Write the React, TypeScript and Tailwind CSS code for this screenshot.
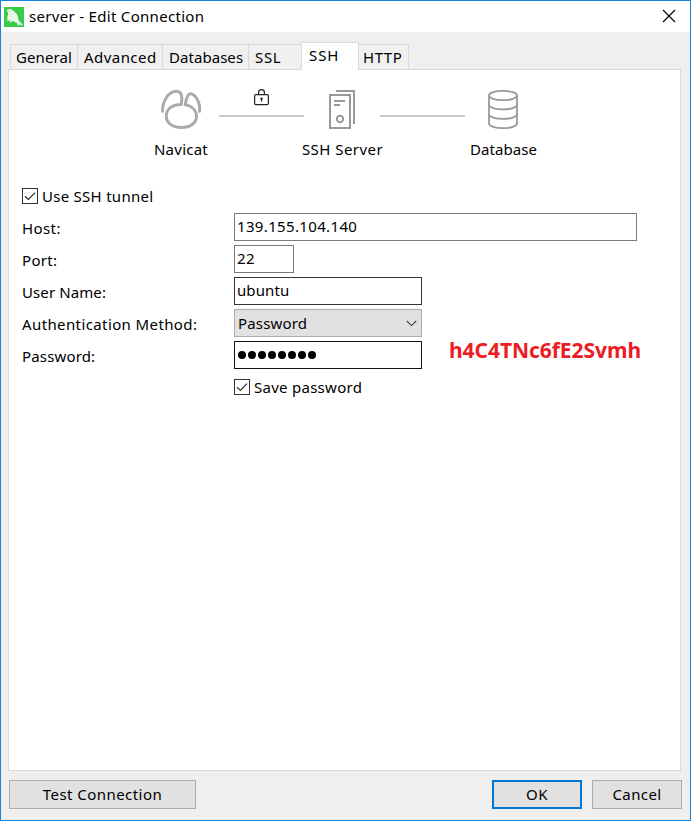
import React from 'react';

function CheckBox({ label, tracking }: { label: string; tracking: string }) {
  return (
    <label className="flex h-4 items-center">
      <span className="flex size-4 shrink-0 items-center justify-center border border-[#333] bg-white">
        <svg width="14" height="14" viewBox="0 0 14 14" fill="none" stroke="#333" strokeWidth="1.3">
          <path d="M2 7.2 5.4 10.4 12 3.6" />
        </svg>
      </span>
      <span className={`ml-1 whitespace-nowrap ${tracking}`}>{label}</span>
    </label>
  );
}

function Row({ label, tracking, children }: { label: string; tracking: string; children: React.ReactNode }) {
  return (
    <div className="flex h-8">
      <div className={`w-[212px] shrink-0 pt-px leading-7 whitespace-nowrap ${tracking}`}>{label}</div>
      {children}
    </div>
  );
}

function Logo() {
  return (
    <svg width="20" height="20" viewBox="0 0 20 20">
      <rect width="20" height="20" fill="#3bcb4b" />
      <path
        d="M2.3 2.8 4 2.8 5.5 2.1 8 2.7 10.8 5 13 7.2 14 10 14.4 13 16 15 18.9 17.6 18.2 18.4 15.7 17.5 14.3 18.9 13.4 16.5 10.8 14.9 8 13.8 7 15.8 5.6 14.6 5.6 12.6 3.6 14.5 3.2 10.5 4.2 7.4 3.7 4.9Z"
        fill="#e9f7e9"
      />
      <circle cx="5.4" cy="4.5" r=".5" fill="#3bcb4b" />
    </svg>
  );
}

const tabs = [
  { name: 'General', cls: 'w-[67px] pl-[5px]', text: 'tracking-[0.1px]' },
  { name: 'Advanced', cls: 'w-[85px] pl-[6px]', text: 'tracking-[0.45px]' },
  { name: 'Databases', cls: 'w-[86px] pl-[6px]', text: 'tracking-[0.05px]' },
  { name: 'SSL', cls: 'w-[53px] pl-[6px]', text: 'tracking-[0.7px]' },
  { name: 'SSH', cls: '', text: 'tracking-[0.9px]' },
  { name: 'HTTP', cls: 'w-[50px] pl-[4px]', text: 'tracking-[0.55px]' },
];

export default function App() {
  return (
    <div className="flex h-[821px] w-[691px] flex-col border border-[#1883d7] bg-[#efefef] font-['Noto_Sans','Noto_Sans_CJK_SC',sans-serif] text-[15px] text-black">
      <header className="flex h-[31px] shrink-0 items-center bg-white pl-[3px]">
        <Logo />
        <h1 className="ml-[5px] grow whitespace-nowrap tracking-[0.31px]">server - Edit Connection</h1>
        <svg className="mr-[14px] mb-px" width="14" height="14" viewBox="0 0 14 14" stroke="#000" strokeWidth="1.15">
          <path d="M1 1 13 13M13 1 1 13" />
        </svg>
      </header>

      <nav className="z-10 flex h-[37px] shrink-0 items-end pl-[9px]">
        {tabs.map((t) =>
          t.name === 'SSH' ? (
            <div key={t.name} className="-mb-px h-[28px] w-[58px] border border-b-0 border-[#d9d9d9] bg-white pl-[7px] leading-[25px]">
              <span className={t.text}>{t.name}</span>
            </div>
          ) : (
            <div
              key={t.name}
              className={`h-[25px] shrink-0 border-t border-[#d9d9d9] bg-[#f0f0f0] leading-[25px] ${t.name === 'HTTP' ? 'border-r' : 'border-l'} ${t.cls}`}
            >
              <span className={t.text}>{t.name}</span>
            </div>
          ),
        )}
      </nav>

      <main className="ml-[7px] flex h-[702px] w-[673px] shrink-0 flex-col border border-[#d9d9d9] bg-white pl-[13px]">
        <section className="flex h-[118px]">
          <div className="ml-[132px] flex w-[54px] flex-col items-center pt-[18px]">
            <svg width="44" height="44" viewBox="0 0 44 44" fill="none" stroke="#ababab" strokeWidth="3" strokeLinejoin="round" strokeLinecap="round">
              <path d="M3.500 23.300C3.500 13 9.500 3.500 17 3.300C22.800 3.200 23.500 8 22.300 16.500C11.500 16.800 7.300 22 7.300 28.300C7.300 35 13.500 39.500 22.300 39.500S37.500 35 37.500 28.600C37.500 22.500 33 18 26.200 16.800C27 11 29 5.700 31.500 5.700C36 5.700 41.500 14 40.500 23.300" />
            </svg>
            <span className="mt-0.5 leading-[30px] whitespace-nowrap tracking-[0.25px]">Navicat</span>
          </div>
          <div className="ml-[11px] flex w-[85px] flex-col items-center pt-[18px]">
            <svg width="17" height="18" viewBox="0 0 17 18" fill="none" stroke="#222" strokeWidth="1.2">
              <rect x="1.6" y="6.6" width="13.8" height="10" rx="1.3" />
              <path d="M5.6 6.500V4.500a2.900 2.900 0 0 1 5.800 0v2" />
              <path d="M8.500 10.500v3" strokeWidth="1.2" />
              <circle cx="8.5" cy="10.6" r="1.2" fill="#222" stroke="none" />
            </svg>
            <div className="mt-[9px] h-0.5 w-full bg-[#c8c8c8]" />
          </div>
          <div className="-ml-[3px] flex w-[83px] flex-col items-center pt-[19px]">
            <svg width="27" height="42" viewBox="0 0 27 42" fill="none" stroke="#999" strokeWidth="2">
              <path d="M1 6h20v33H1zM7 2h18v33M5 12h11M5 16h6" />
              <circle cx="11" cy="30" r="3.2" />
            </svg>
            <span className="mt-[3px] leading-[30px] whitespace-nowrap tracking-[0.45px]">SSH Server</span>
          </div>
          <div className="-ml-[4px] flex w-[85px] flex-col pt-[45px]">
            <div className="h-0.5 w-full bg-[#c8c8c8]" />
          </div>
          <div className="ml-[5px] flex w-[67px] flex-col items-center pt-[19px]">
            <svg width="31" height="42" viewBox="0 0 31 42" fill="none" stroke="#999" strokeWidth="1.8">
              <ellipse cx="15" cy="6.5" rx="14" ry="4.7" />
              <path d="M1 6.500v28c0 2.600 6.300 4.700 14 4.700s14-2.100 14-4.700v-28M1 15.700c0 2.600 6.300 4.700 14 4.700s14-2.100 14-4.700M1 25.200c0 2.600 6.300 4.700 14 4.700s14-2.100 14-4.700" />
            </svg>
            <span className="mt-[3px] leading-[30px] tracking-[0.05px]">Database</span>
          </div>
        </section>

        <CheckBox label="Use SSH tunnel" tracking="tracking-[0.27px]" />

        <section className="mt-[9px] flex flex-col">
          <Row label="Host:" tracking="tracking-[0.4px]">
            <div className="h-7 w-[403px] border border-[#7a7a7a] pl-[2px] leading-[25px] tracking-[0.35px]">139.155.104.140</div>
          </Row>
          <Row label="Port:" tracking="tracking-[0.3px]">
            <div className="h-7 w-[60px] border border-[#7a7a7a] pl-[2px] leading-[25px] tracking-[0.3px]">22</div>
          </Row>
          <Row label="User Name:" tracking="tracking-[0.1px]">
            <div className="h-7 w-[188px] border border-[#333] pl-[2px] leading-[25px] tracking-[0.1px]">ubuntu</div>
          </Row>
          <Row label="Authentication Method:" tracking="tracking-[0.39px]">
            <div className="flex h-7 w-[188px] items-center justify-between border border-[#adadad] bg-[#e1e1e1] pr-[4px] pl-[3px]">
              <span className="tracking-[0.15px]">Password</span>
              <svg width="11" height="7" viewBox="0 0 11 7" fill="none" stroke="#444" strokeWidth="1.1">
                <path d="M.8 1 5.500 5.600 10.200 1" />
              </svg>
            </div>
          </Row>
          <Row label="Password:" tracking="tracking-[0.15px]">
            <div className="flex h-7 w-[188px] items-center gap-[2px] border border-[#111] pl-[3px]">
              {Array.from({ length: 8 }, (_, i) => (
                <span key={i} className="size-2 rounded-full bg-black" />
              ))}
            </div>
            <strong className="ml-[27px] text-[21px] leading-[18px] font-bold tracking-[-0.05px] text-[#ed1c24]">h4C4TNc6fE2Svmh</strong>
          </Row>
        </section>

        <div className="mt-[6px] ml-[212px]">
          <CheckBox label="Save password" tracking="tracking-[0.27px]" />
        </div>
      </main>

      <footer className="flex pt-[9px] pl-[8px]">
        <button className="h-[29px] w-[187px] border border-[#adadad] bg-[#e1e1e1] tracking-[0.45px]">Test Connection</button>
        <button className="ml-[296px] h-[29px] w-[90px] border-2 border-[#0078d7] bg-[#e1e1e1] tracking-[0.5px]">OK</button>
        <button className="ml-[10px] h-[29px] w-[90px] border border-[#adadad] bg-[#e1e1e1] tracking-[0.4px]">Cancel</button>
      </footer>
    </div>
  );
}
